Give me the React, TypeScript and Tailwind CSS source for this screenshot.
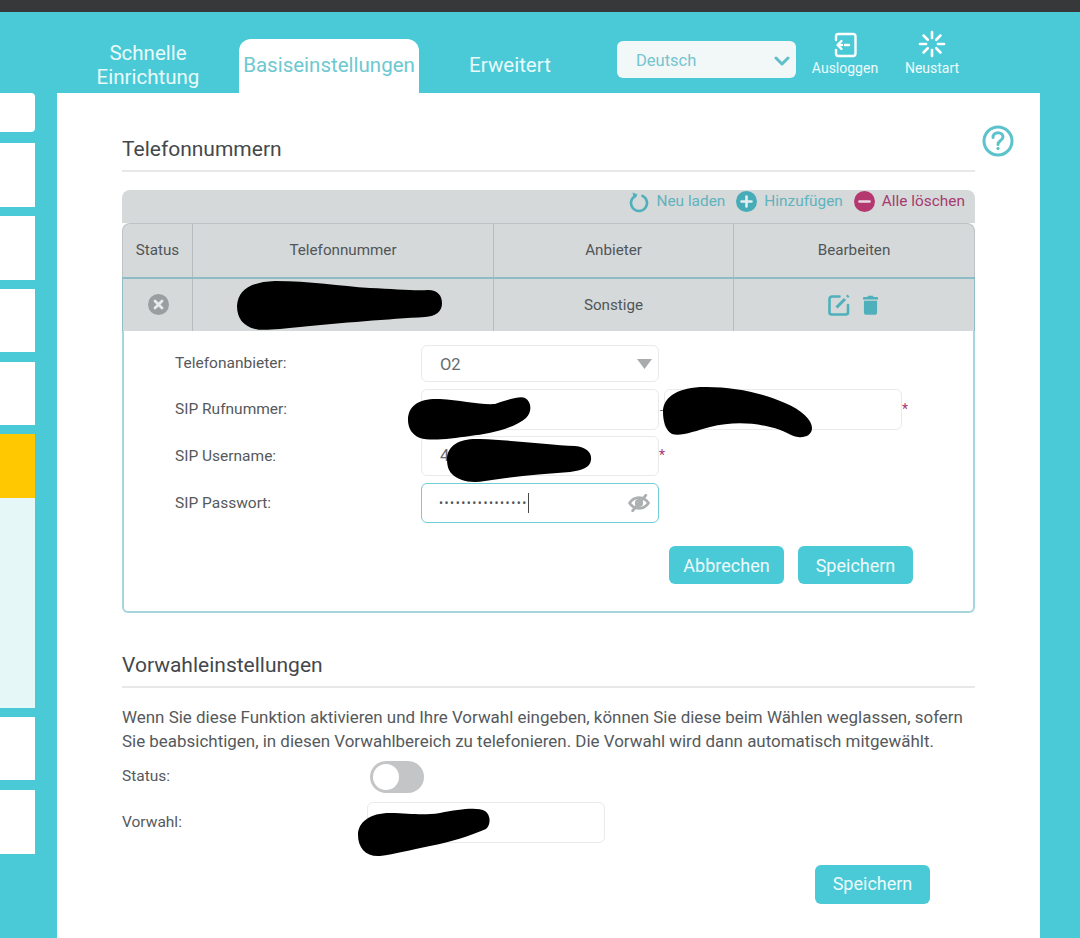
const font = { fontFamily: 'Roboto, "Noto Sans", sans-serif' };

const sidebarItems = [
  'h-[39px] rounded-r bg-white',
  'mt-[11px] h-[64px] bg-white',
  'mt-[9px] h-[64px] bg-white',
  'mt-[9px] h-[63px] bg-white',
  'mt-[10px] h-[63px] bg-white',
  'mt-[9px] h-[64px] bg-[#ffc800]',
  'h-[210px] bg-[#e6f7f8]',
  'mt-[9px] h-[63px] bg-white',
  'mt-[10px] h-[64px] bg-white',
];

function LogoutIcon() {
  return (
    <svg width="26" height="26" viewBox="0 0 26 26" fill="none" stroke="white" strokeWidth="2.4" strokeLinecap="round" strokeLinejoin="round">
      <path d="M4 8V4.500C4 3 5 2 6.500 2H21c1.500 0 2.500 1 2.500 2.500v17c0 1.500-1 2.500-2.500 2.500H6.500C5 24 4 23 4 21.500V18" />
      <path d="M9.500 9 5.500 13l4 4" />
      <path d="M8 13h2M13 13h4" />
    </svg>
  );
}

function SpinnerIcon() {
  const spokes = [0, 45, 90, 135, 180, 225, 270, 315];
  return (
    <svg width="28" height="28" viewBox="0 0 28 28" fill="none" stroke="white" strokeWidth="2.6" strokeLinecap="round">
      {spokes.map((deg) => (
        <path key={deg} d="M14 2v6" transform={`rotate(${deg} 14 14)`} />
      ))}
    </svg>
  );
}

function ReloadIcon() {
  return (
    <svg width="20" height="22" viewBox="0 0 20 22" fill="none">
      <path d="M6.500 4.800a8 8 0 1 0 7 0" stroke="#4fb0bb" strokeWidth="2.600" strokeLinecap="round" />
      <path d="M3.500 1.500 8.500 3.500 5 7.500z" fill="#4fb0bb" />
    </svg>
  );
}

function RoundIcon(props: { color: string; kind: 'plus' | 'minus' | 'x'; size?: number }) {
  const { color, kind, size = 21 } = props;
  return (
    <svg width={size} height={size} viewBox="0 0 21 21">
      <circle cx="10.500" cy="10.500" r="10.500" fill={color} />
      {kind === 'plus' ? <path d="M10.500 5.500v10M5.500 10.500h10" stroke="#e5eeef" strokeWidth="2.600" strokeLinecap="round" /> : null}
      {kind === 'minus' ? <path d="M5.500 10.500h10" stroke="#e9dbe3" strokeWidth="2.600" strokeLinecap="round" /> : null}
      {kind === 'x' ? <path d="M7 7l7 7M14 7l-7 7" stroke="#e8eaea" strokeWidth="2.800" strokeLinecap="round" /> : null}
    </svg>
  );
}

function EditIcon() {
  return (
    <svg width="23" height="23" viewBox="0 0 23 23" fill="none">
      <path d="M11.500 3.500H4C2.700 3.500 1.500 4.700 1.500 6v13.500c0 1.300 1.200 2 2.500 2h13.500c1.300 0 2.500-.7 2.500-2V12" stroke="#4fb0bb" strokeWidth="2.600" strokeLinecap="round" />
      <path d="M8.500 14.500 17 6" stroke="#4fb0bb" strokeWidth="3" />
      <path d="M19.500 1.500l2 2-1.500 1.500-2-2z" fill="#4fb0bb" />
    </svg>
  );
}

function TrashIcon() {
  return (
    <svg width="15" height="22" viewBox="0 0 16 22">
      <path d="M5.500 1h5l.8 1.500H15c.6 0 1 .4 1 1V5H0V3.500c0-.6.4-1 1-1h3.700z" fill="#4fb0bb" />
      <path d="M1 6.500h14V19c0 1.600-1 2.500-2.500 2.500h-9C2 21.500 1 20.600 1 19z" fill="#4fb0bb" />
    </svg>
  );
}

function EyeOffIcon() {
  return (
    <svg width="22" height="18" viewBox="0 0 24 20" fill="none" stroke="#adb0b1" strokeWidth="3">
      <path d="M1.500 10C4 6 7.500 4 12 4s8 2 10.500 6C20 14 16.500 16 12 16S4 14 1.500 10z" />
      <circle cx="12" cy="10" r="3" />
      <path d="M5 18.500 19.500 1.500" strokeWidth="3.200" strokeLinecap="round" />
    </svg>
  );
}

function HelpIcon() {
  return (
    <svg width="32" height="32" viewBox="0 0 32 32" fill="none" stroke="#5cc3cd" strokeWidth="3">
      <circle cx="16" cy="16" r="14" />
      <path d="M11 12.500c0-3 2.200-4.800 5-4.800s5 1.800 5 4.300c0 3.700-5 3.500-5 7.500" strokeLinecap="round" />
      <circle cx="16" cy="23.500" r="1.200" fill="#5cc3cd" strokeWidth="1" />
    </svg>
  );
}

function Scribbles() {
  return (
    <svg className="pointer-events-none absolute left-0 top-0" width="1080" height="938" viewBox="0 0 1080 938" fill="#000">
      <path d="M237 306C238 290 250 282 275 281C310 281 340 286 370 288C395 289 415 291 428 290C438 290 442 296 442 303C442 312 436 316 425 317C390 319 340 323 300 327C280 329 262 331 255 329C243 326 237 318 237 306Z" />
      <path d="M408 420C408 405 420 398 440 399C460 400 480 405 495 404C510 399 520 396 525 398C532 402 532 412 526 418C515 428 490 434 470 436C450 439 430 441 420 438C412 435 408 428 408 420Z" />
      <path d="M663 412C663 398 675 389 700 387C730 386 760 392 785 403C802 410 812 420 812 428C812 435 805 438 798 437C790 436 785 430 770 427C750 422 730 422 710 427C695 431 680 437 672 434C666 431 663 422 663 412Z" />
      <path d="M447 458C448 445 460 438 480 439C510 440 550 445 575 446C587 447 592 453 591 460C590 468 582 470 570 472C540 474 510 477 485 481C470 484 458 480 452 474C448 470 447 465 447 458Z" />
      <path d="M358 835C358 822 370 813 390 813C410 813 420 816 440 813C460 809 478 807 485 811C491 815 491 825 486 829C470 836 450 842 430 846C410 850 395 854 380 856C366 857 358 848 358 835Z" />
    </svg>
  );
}

function FormRow(props: { label: string; className: string; children: React.ReactNode }) {
  return (
    <div className={`flex items-center ${props.className}`}>
      <div className="w-[246px] shrink-0 pt-[1px] text-[15.500px] text-[#55595c]">{props.label}</div>
      {props.children}
    </div>
  );
}

const inputBox = 'h-full w-[238px] shrink-0 rounded-md border border-[#e8eaeb] bg-white';
const primaryBtn = 'flex h-[38px] w-[115px] items-center justify-center rounded-md bg-[#4acad6] text-[18px] text-[#eefafb]';

export default function App() {
  return (
    <div className="relative h-[938px] w-[1080px] overflow-hidden bg-[#4acad6]" style={font}>
      <div className="h-[12px] bg-[#37383a]" />

      <header className="flex h-[81px] items-end pl-[57px]">
        <div className="flex h-[81px] w-[182px] items-center justify-center pt-[25px] text-center text-[20.500px] leading-[24px] text-[#e9fafb]">
          Schnelle
          <br />
          Einrichtung
        </div>
        <div className="flex h-[54px] w-[180px] items-center justify-center rounded-t-xl bg-white pb-[2px] text-[20.500px] text-[#6cc8d1]">
          Basiseinstellungen
        </div>
        <div className="flex h-[81px] w-[182px] items-center justify-center pt-[25px] text-[20.500px] text-[#e9fafb]">Erweitert</div>
        <div className="mb-[15px] ml-[16px] flex h-[37px] w-[179px] items-center justify-between rounded-md bg-[#f2f7f8] pl-[19px] pr-[6px] pt-[3px] text-[16.500px] text-[#73c6ce]">
          Deutsch
          <svg width="16" height="10" viewBox="0 0 16 10" fill="none" stroke="#5fc0ca" strokeWidth="3" strokeLinecap="round" strokeLinejoin="round">
            <path d="M2 2l6 6 6-6" />
          </svg>
        </div>
        <div className="mb-[16px] flex w-[98px] flex-col items-center gap-[1px] text-[14px] leading-[18px] text-[#eefafb]">
          <LogoutIcon />
          Ausloggen
        </div>
        <div className="mb-[16px] flex w-[76px] flex-col items-center gap-[1px] text-[14px] leading-[18px] text-[#eefafb]">
          <SpinnerIcon />
          Neustart
        </div>
      </header>

      <div className="flex items-start">
        <aside className="w-[35px] shrink-0">
          {sidebarItems.map((item, i) => (
            <div key={i} className={item} />
          ))}
        </aside>

        <main className="relative ml-[22px] h-[845px] w-[983px] bg-white px-[65px] pt-[40px]">
          <div className="absolute right-[26px] top-[32px]">
            <HelpIcon />
          </div>

          <h2 className="h-[39px] border-b-2 border-[#e6e8e9] pt-[1px] text-[21px] leading-[30px] text-[#44484b]">Telefonnummern</h2>

          <section className="mt-[18px]">
            <div className="flex h-[33px] items-center justify-end gap-[11px] rounded-t-lg bg-[#d5d9da] pb-[10px] pr-[10px] text-[15.400px]">
              <div className="flex items-center gap-[7px] text-[#5fb3bd]">
                <ReloadIcon />
                Neu laden
              </div>
              <div className="flex items-center gap-[7px] text-[#5fb3bd]">
                <RoundIcon color="#45acb8" kind="plus" />
                Hinzufügen
              </div>
              <div className="flex items-center gap-[7px] text-[#a63a6f]">
                <RoundIcon color="#b5376f" kind="minus" />
                Alle löschen
              </div>
            </div>

            <div className="grid h-[54px] grid-cols-[70px_301px_240px_242px] rounded-t-lg border-x border-t border-[#bcc3c5] bg-[#d5d9da] text-center text-[15.200px] text-[#505558]">
              <div className="flex items-center justify-center border-r border-[#b4bcbe]">Status</div>
              <div className="flex items-center justify-center border-r border-[#b4bcbe]">Telefonnummer</div>
              <div className="flex items-center justify-center border-r border-[#b4bcbe]">Anbieter</div>
              <div className="flex items-center justify-center pr-[2px]">Bearbeiten</div>
            </div>

            <div className="grid h-[54px] grid-cols-[70px_301px_240px_242px] border-x border-t-2 border-[#8dbcc6] bg-[#d5d9da] text-center text-[15.200px] text-[#505558]">
              <div className="flex items-center justify-center border-r border-[#b4bcbe] pb-[2px] pl-[2px]">
                <RoundIcon color="#9a9ea1" kind="x" />
              </div>
              <div className="border-r border-[#b4bcbe]" />
              <div className="flex items-center justify-center border-r border-[#b4bcbe] pt-[1px]">Sonstige</div>
              <div className="flex items-center justify-center gap-[12px] pb-[1px] pr-[4px]">
                <EditIcon />
                <TrashIcon />
              </div>
            </div>

            <div className="h-[282px] rounded-b-md border-x-2 border-b-2 border-[#a6d5dd] pl-[51px] pt-[14px]">
              <FormRow label="Telefonanbieter:" className="h-[37px]">
                <div className={`${inputBox} flex items-center justify-between pl-[18px] pr-[6px] pt-[3px] text-[16.500px] text-[#666a6d]`}>
                  O2
                  <svg width="15" height="10" viewBox="0 0 15 10" className="mb-[3px]">
                    <path d="M0 0h15L7.500 10z" fill="#a9acad" />
                  </svg>
                </div>
              </FormRow>
              <FormRow label="SIP Rufnummer:" className="mt-[7px] h-[41px]">
                <div className={inputBox} />
                <span className="w-[5px] text-center text-[13px] leading-none text-[#666a6d]">-</span>
                <div className={inputBox} />
                <span className="self-start pt-[10px] text-[14px] text-[#a63a6f]">*</span>
              </FormRow>
              <FormRow label="SIP Username:" className="mt-[6px] h-[40px]">
                <div className={`${inputBox} flex items-center pl-[18px] text-[16.500px] text-[#666a6d]`}>4</div>
                <span className="self-start pt-[9px] text-[14px] text-[#a63a6f]">*</span>
              </FormRow>
              <FormRow label="SIP Passwort:" className="mt-[7px] h-[40px]">
                <div className="flex h-full w-[238px] shrink-0 items-center justify-between rounded-md border border-[#6fcdd6] bg-white pl-[17px] pr-[8px]">
                  <div className="flex h-[20px] items-center">
                    <span className="text-[12px] tracking-[1.500px] text-[#55595c]">••••••••••••••••</span>
                    <span className="h-[20px] w-px bg-[#44484b]" />
                  </div>
                  <EyeOffIcon />
                </div>
              </FormRow>
              <div className="mt-[23px] flex justify-end gap-[14px] pr-[60px]">
                <div className={primaryBtn}>Abbrechen</div>
                <div className={primaryBtn}>Speichern</div>
              </div>
            </div>
          </section>

          <h2 className="mt-[36px] h-[39px] border-b-2 border-[#e6e8e9] pt-[1px] text-[21px] leading-[30px] text-[#44484b]">Vorwahleinstellungen</h2>

          <p className="mt-[17px] whitespace-nowrap text-[16.950px] leading-[24px] text-[#55595c]">
            Wenn Sie diese Funktion aktivieren und Ihre Vorwahl eingeben, können Sie diese beim Wählen weglassen, sofern
            <br />
            Sie beabsichtigen, in diesen Vorwahlbereich zu telefonieren. Die Vorwahl wird dann automatisch mitgewählt.
          </p>

          <div className="mt-[8px] flex h-[32px] items-center text-[15.500px] text-[#55595c]">
            <div className="w-[248px] shrink-0">Status:</div>
            <div className="flex h-[32px] w-[54px] items-center rounded-full bg-[#c4c5c6] px-[3px]">
              <div className="h-[26px] w-[26px] rounded-full bg-white" />
            </div>
          </div>

          <div className="mt-[9px] flex h-[41px] items-center text-[15.500px] text-[#55595c]">
            <div className="w-[245px] shrink-0">Vorwahl:</div>
            <div className={inputBox} />
          </div>

          <div className="mt-[22px] flex justify-end pr-[45px]">
            <div className={`${primaryBtn} h-[39px] pb-[2px]`}>Speichern</div>
          </div>
        </main>
      </div>

      <Scribbles />
    </div>
  );
}
